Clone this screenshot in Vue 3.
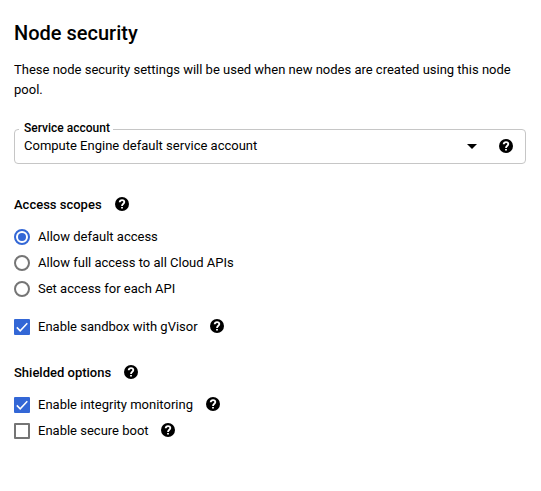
<script setup>
import { h, ref } from 'vue'

const HelpIcon = () =>
  h('svg', { class: 'help', viewBox: '0 0 14 14', role: 'img' }, [
    h('circle', { cx: 7, cy: 7, r: 7 }),
    h('path', {
      fill: 'none',
      stroke: '#fff',
      'stroke-width': 1.85,
      d: 'M4.7 5.3c0-1.3 1-2.2 2.3-2.2s2.3.9 2.3 2C9.3 6.7 7 6.9 7 9',
    }),
    h('path', { fill: '#fff', d: 'M6.1 9.9h1.8v1.7H6.1z' }),
  ])

const scope = ref(0)
const scopes = ['Allow default access', 'Allow full access to all Cloud APIs', 'Set access for each API']
const sandbox = ref([{ label: 'Enable sandbox with gVisor', checked: true }])
const shielded = ref([
  { label: 'Enable integrity monitoring', checked: true },
  { label: 'Enable secure boot', checked: false },
])
</script>

<template>
  <main class="page">
    <h1>Node security</h1>
    <p class="intro">These node security settings will be used when new nodes are created using this node pool.</p>

    <div class="field">
      <span class="field-label">Service account</span>
      <span class="value">Compute Engine default service account</span>
      <svg class="arrow" viewBox="0 0 10 5"><path d="M0 0h10L5 5z" /></svg>
      <HelpIcon />
    </div>

    <h2 class="scopes-title"><span>Access scopes</span><HelpIcon /></h2>
    <div v-for="(label, i) in scopes" :key="label" class="row" @click="scope = i">
      <span class="radio" :class="{ on: scope === i }"></span>
      <span>{{ label }}</span>
    </div>

    <div
      v-for="(group, g) in [sandbox, shielded]"
      :key="g"
      class="group"
    >
      <h2 v-if="g === 1" class="shielded-title"><span>Shielded options</span><HelpIcon /></h2>
      <div v-for="item in group" :key="item.label" class="row" @click="item.checked = !item.checked">
        <span class="box" :class="{ on: item.checked }">
          <svg v-if="item.checked" viewBox="0 0 16 16"><path d="M2.8 8.4 6.2 11.8 13.3 4.3" /></svg>
        </span>
        <span>{{ item.label }}</span>
        <HelpIcon />
      </div>
    </div>
  </main>
</template>

<style>
body {
  background: #fff;
}
</style>

<style scoped>
.page {
  box-sizing: border-box;
  width: 541px;
  padding: 21px 15px 0 14px;
  font-family: Roboto, "Liberation Sans", sans-serif;
  font-size: 13px;
  line-height: 20px;
  color: #000;
}
h1 {
  margin: 0;
  font-size: 20px;
  font-weight: 500;
  line-height: 24px;
}
.intro {
  margin: 15px 0 29px;
}
.field {
  position: relative;
  box-sizing: border-box;
  display: flex;
  align-items: center;
  height: 35px;
  padding: 0 12px 1px 9px;
  border: 1px solid #c6c6c6;
  border-radius: 4px;
}
.field-label {
  position: absolute;
  top: -10px;
  left: 4px;
  padding: 0 3px 0 5px;
  background: #fff;
  font-size: 12px;
  font-weight: 500;
  line-height: 16px;
}
.value {
  flex: 1;
}
.arrow {
  width: 10px;
  height: 5px;
  margin-right: 9px;
}
.help {
  flex: none;
  width: 14px;
  height: 14px;
  margin-left: 13px;
}
.row .help {
  margin: 0 0 2px 12.7px;
}
h2 {
  display: flex;
  align-items: center;
  margin: 0;
  font-size: 13px;
  font-weight: 500;
  line-height: 20px;
}
h2 span {
  padding-top: 2px;
  line-height: 18px;
}
.scopes-title {
  margin: 30px 0 10px;
}
.shielded-title {
  margin: 22px 0 10px;
}
.group:nth-of-type(5) {
  margin-top: 12px;
}
.row {
  display: flex;
  align-items: center;
  height: 26px;
}
.radio,
.box {
  box-sizing: border-box;
  flex: none;
  width: 16px;
  height: 16px;
  margin-right: 8px;
  border: 2px solid #757575;
}
.radio {
  border-radius: 50%;
}
.radio.on {
  display: flex;
  align-items: center;
  justify-content: center;
  border-color: #3367d6;
}
.radio.on::after {
  content: "";
  width: 8px;
  height: 8px;
  border-radius: 50%;
  background: #3367d6;
}
.box {
  border-radius: 1px;
}
.box.on {
  border: 0;
  background: #3367d6;
}
.box svg {
  display: block;
  width: 16px;
  height: 16px;
}
.box path {
  fill: none;
  stroke: #fff;
  stroke-width: 1.5;
}
</style>
